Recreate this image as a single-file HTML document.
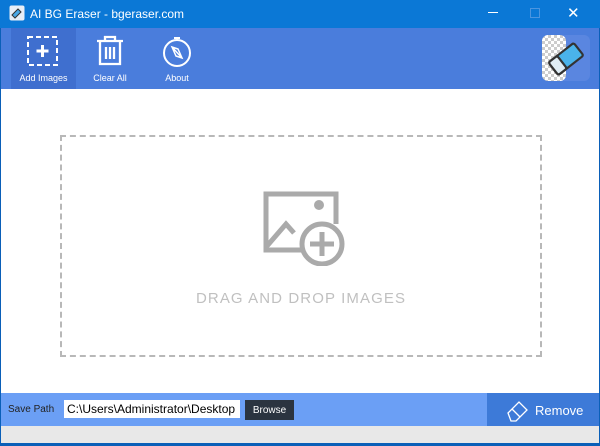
<!DOCTYPE html><html><head><style>
body{margin:0;width:600px;height:446px;overflow:hidden;font-family:"Liberation Sans",sans-serif;background:#0a5fb8;position:relative}
.a{position:absolute}
</style></head><body>
<div class="a" style="left:0;top:0;width:600px;height:28px;background:#0b78d6"></div>
<svg class="a" style="left:9px;top:5px" width="16" height="16" viewBox="0 0 16 16"><rect x="0.5" y="0.5" width="15" height="15" rx="2" fill="#e8eef7"/><path d="M3 10 L9 4 L12 7 L6 13 Z" fill="#4aa8e6" stroke="#333" stroke-width="1"/></svg>
<div class="a" style="left:30px;top:7px;color:#fff;font-size:12px">AI BG Eraser - bgeraser.com</div>
<div class="a" style="left:488px;top:12px;width:10px;height:1px;background:#fff"></div>
<div class="a" style="left:530px;top:8px;width:8px;height:8px;border:1px solid #4b95e0"></div>
<div class="a" style="left:567px;top:4px;color:#fff;font-size:15px">✕</div>
<div class="a" style="left:1px;top:28px;width:598px;height:61px;background:#4a7ddc"></div>
<div class="a" style="left:11px;top:28px;width:65px;height:61px;background:#3f6fcf"></div>
<svg class="a" style="left:26px;top:35px" width="34" height="32" viewBox="0 0 34 32"><rect x="2" y="2" width="29" height="28" fill="none" stroke="#fff" stroke-width="2" stroke-dasharray="5 3"/><path d="M16.5 10v12M10.5 16h12" stroke="#fff" stroke-width="3"/></svg>
<div class="a" style="left:11px;top:73px;width:65px;text-align:center;color:#fff;font-size:9px">Add Images</div>
<svg class="a" style="left:94px;top:34px" width="32" height="34" viewBox="0 0 32 34"><path d="M3 7h26M11 7V3h10v4M6 8v22h20V8" fill="none" stroke="#fff" stroke-width="2.3"/><path d="M12 13v12M16 13v12M20 13v12" stroke="#fff" stroke-width="2.3"/></svg>
<div class="a" style="left:80px;top:73px;width:60px;text-align:center;color:#fff;font-size:9px">Clear All</div>
<svg class="a" style="left:161px;top:35px" width="32" height="34" viewBox="0 0 32 34"><circle cx="16" cy="18" r="13" fill="none" stroke="#fff" stroke-width="2"/><path d="M13 3h6" stroke="#fff" stroke-width="2"/><path d="M11 12l10 11M11 12l4 9 6 2-4-9z" fill="none" stroke="#fff" stroke-width="1.5"/></svg>
<div class="a" style="left:147px;top:73px;width:60px;text-align:center;color:#fff;font-size:9px">About</div>
<svg class="a" style="left:542px;top:35px" width="48" height="46" viewBox="0 0 48 46"><defs><pattern id="c" width="6" height="6" patternUnits="userSpaceOnUse"><rect width="6" height="6" fill="#fff"/><rect width="3" height="3" fill="#ccc"/><rect x="3" y="3" width="3" height="3" fill="#ccc"/></pattern></defs><rect width="48" height="46" rx="6" fill="#5a86e0"/><rect width="24" height="46" rx="6" fill="url(#c)"/>
<g transform="rotate(-38 24 24)"><rect x="8" y="16" width="32" height="16" rx="2" fill="#4ab3ea" stroke="#333" stroke-width="2.2"/><rect x="8" y="16" width="11" height="16" rx="2" fill="#e0edf5" stroke="#333" stroke-width="2.2"/></g></svg>
<div class="a" style="left:1px;top:89px;width:598px;height:304px;background:#fff"></div>
<div class="a" style="left:60px;top:135px;width:478px;height:218px;border:2px dashed #b8b8b8"></div>
<svg class="a" style="left:260px;top:188px" width="88" height="78" viewBox="0 0 88 78"><path d="M44 62H6V6h70v30" fill="none" stroke="#aaa" stroke-width="5"/><path d="M7 58 L26 36 L34 45" fill="none" stroke="#aaa" stroke-width="5"/><circle cx="59" cy="17" r="5" fill="#aaa"/><circle cx="62" cy="56" r="20" fill="#fff" stroke="#aaa" stroke-width="5"/><path d="M62 44v24M50 56h24" stroke="#aaa" stroke-width="5"/></svg>
<div class="a" style="left:60px;top:290px;width:482px;text-align:center;color:#c0c0c0;font-size:15px;letter-spacing:1.1px">DRAG AND DROP IMAGES</div>
<div class="a" style="left:1px;top:393px;width:598px;height:33px;background:#6b9ff5"></div>
<div class="a" style="left:8px;top:404px;font-size:10px;color:#222">Save Path</div>
<div class="a" style="left:64px;top:400px;width:176px;height:18px;background:#fff;font-size:12px;line-height:18px;padding-left:3px;box-sizing:border-box;color:#000;white-space:nowrap;overflow:hidden">C:\Users\Administrator\Desktop</div>
<div class="a" style="left:245px;top:400px;width:49px;height:20px;background:#2b3440;color:#fff;font-size:10px;line-height:22px;text-align:center">Browse</div>
<div class="a" style="left:487px;top:393px;width:112px;height:33px;background:#3d7ad8"></div>
<svg class="a" style="left:506px;top:398px" width="24" height="24" viewBox="0 0 24 24"><path d="M2 15 L13 4 L21 12 L10 23 L5 23 Z M6 11 L14 19" fill="none" stroke="#fff" stroke-width="1.3"/></svg>
<div class="a" style="left:535px;top:403px;color:#fff;font-size:13px">Remove</div>
<div class="a" style="left:1px;top:426px;width:598px;height:17px;background:#e8e8e8"></div>
</body></html>
